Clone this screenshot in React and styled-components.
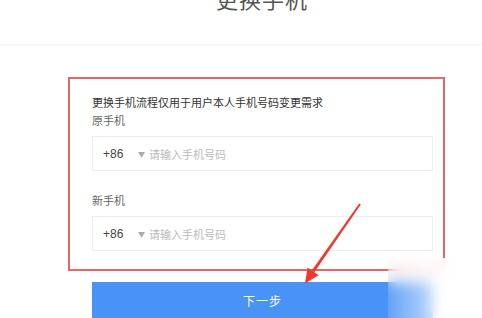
import React from 'react';
import styled, { createGlobalStyle } from 'styled-components';

const GlobalStyle = createGlobalStyle`
  html, body {
    margin: 0;
    padding: 0;
    background: #fff;
    overflow: hidden;
  }
  body {
    font-family: "Noto Sans CJK SC", "Liberation Sans", sans-serif;
    color: #333;
  }
`;

const Page = styled.div`
  position: relative;
  width: 482px;
  height: 318px;
  overflow: hidden;
`;

const Header = styled.header`
  height: 46px;
  border-bottom: 2px solid #f7f7f7;
  display: flex;
  justify-content: center;
  padding-left: 42px;
  box-sizing: border-box;
`;

const Title = styled.h1`
  margin: -14px 0 0;
  font-size: 22px;
  line-height: 24px;
  font-weight: 400;
  letter-spacing: 1px;
  color: #555;
`;

const Main = styled.main`
  padding: 31px 0 0 68px;
`;

const Highlight = styled.section`
  width: 377px;
  box-sizing: border-box;
  border: 2px solid #e46868;
  padding: 15px 10px 18px 22px;
`;

const Notice = styled.p`
  margin: 0;
  font-size: 11px;
  line-height: 17px;
  color: #333;
`;

const Label = styled.div`
  font-size: 11px;
  line-height: 17px;
  color: #666;
  margin-top: ${(p) => p.$top}px;
  margin-bottom: 7px;
`;

const PhoneField = styled.div`
  display: flex;
  align-items: center;
  height: 35px;
  width: 341px;
  box-sizing: border-box;
  border: 1px solid #ededed;
  padding-left: 10px;
`;

const Code = styled.span`
  font-family: "Liberation Sans", Arial, sans-serif;
  font-size: 12px;
  color: #444;
  width: 35px;
`;

const Caret = styled.span`
  font-size: 7px;
  color: #aaa;
  width: 11px;
`;

const Placeholder = styled.span`
  font-size: 11px;
  color: #bbb;
`;

const NextButton = styled.button`
  display: block;
  margin: 11px 0 0 24px;
  width: 341px;
  height: 40px;
  border: none;
  background: #4a93f6;
  color: #fff;
  font-family: inherit;
  font-size: 12px;
  letter-spacing: 1px;
  padding: 0 0 4px;
`;

const Arrow = styled.svg`
  position: absolute;
  left: 0;
  top: 0;
  pointer-events: none;
`;

const Watermark = styled.div`
  position: absolute;
  left: 388px;
  top: 258px;
  width: 94px;
  height: 60px;
  backdrop-filter: blur(7px);
  background: linear-gradient(90deg, rgba(255,255,255,0.15), rgba(255,255,255,0.75) 60%, rgba(255,255,255,0.9));
`;

const PhoneInput = () => (
  <PhoneField>
    <Code>+86</Code>
    <Caret>▼</Caret>
    <Placeholder>请输入手机号码</Placeholder>
  </PhoneField>
);

const App = () => (
  <Page>
    <GlobalStyle />
    <Header>
      <Title>更换手机</Title>
    </Header>
    <Main>
      <Highlight>
        <Notice>更换手机流程仅用于用户本人手机号码变更需求</Notice>
        <Label $top={1}>原手机</Label>
        <PhoneInput />
        <Label $top={21}>新手机</Label>
        <PhoneInput />
      </Highlight>
      <NextButton>下一步</NextButton>
    </Main>
    <Arrow width="482" height="318" viewBox="0 0 482 318">
      <polygon points="359.2,203.5 360.8,204.6 314.2,272.4 311.8,270.6" fill="#f0392b" />
      <polygon points="305,283.5 307.6,267.6 318.6,275.2" fill="#f0392b" />
    </Arrow>
    <Watermark />
  </Page>
);

export default App;
